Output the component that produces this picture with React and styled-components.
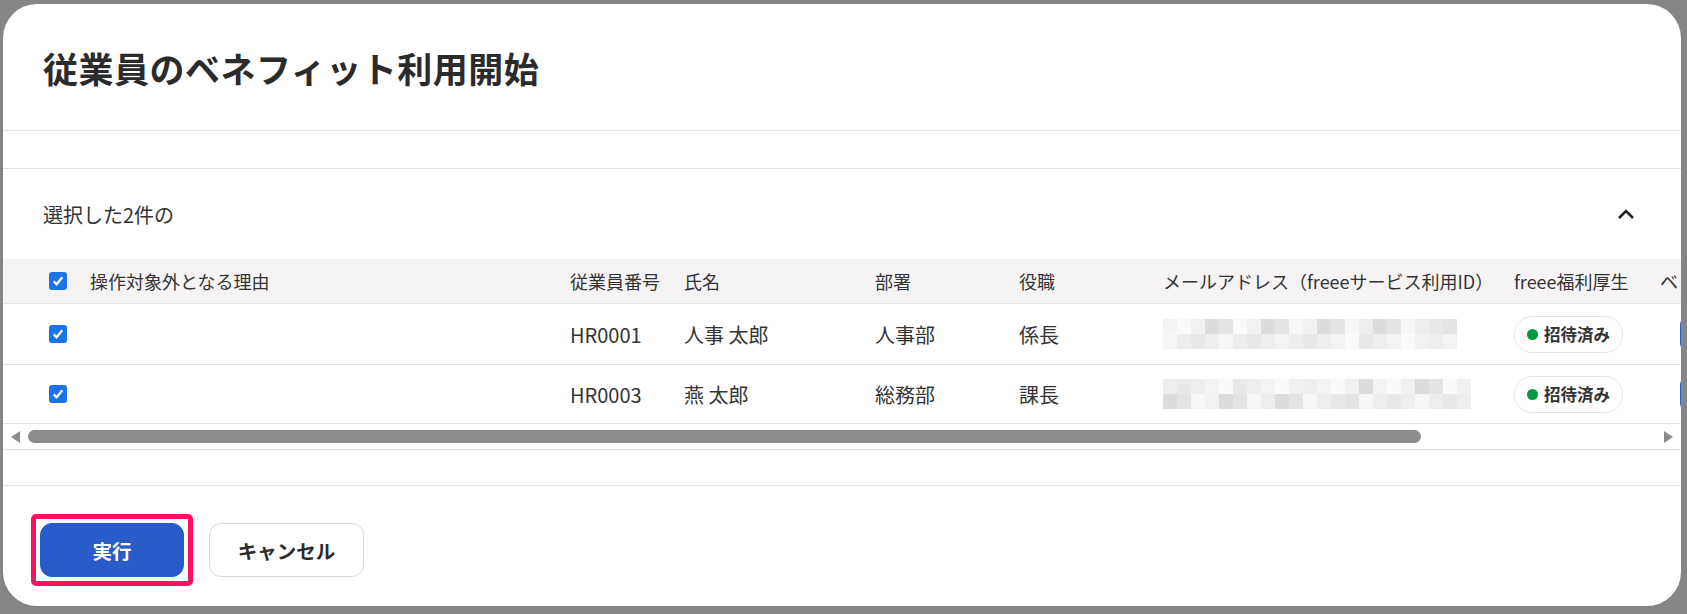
import React from "react";
import styled, { createGlobalStyle } from "styled-components";

const Global = createGlobalStyle`
  html, body { margin: 0; padding: 0; background: #858585; }
  body { font-family: "Noto Sans CJK JP", "Noto Sans", sans-serif; color: #222; }
`;

const Screen = styled.div`
  width: 1687px;
  height: 614px;
  overflow: hidden;
  padding: 4px 6px 0 3px;
  box-sizing: border-box;
`;

const Dialog = styled.div`
  background: #fff;
  border-radius: 34px;
  height: 602px;
  display: flex;
  flex-direction: column;
  overflow: hidden;
`;

const Header = styled.div`
  height: 127px;
  display: flex;
  align-items: center;
  padding-left: 40px;
  border-bottom: 1px solid #e2e2e2;
  box-sizing: border-box;
`;

const Title = styled.h1`
  margin: 0;
  font-size: 35px;
  font-weight: 700;
  color: #2b2b2b;
  letter-spacing: 0.5px;
`;

const Gap = styled.div`
  height: ${(p) => p.h}px;
  border-bottom: 1px solid #e2e2e2;
  flex-shrink: 0;
`;

const SectionHead = styled.div`
  height: 90px;
  display: flex;
  align-items: center;
  justify-content: space-between;
  padding: 0 46px 0 40px;
  font-size: 20px;
  color: #333;
`;

const TableWrap = styled.div`
  overflow: hidden;
`;

const Row = styled.div`
  display: grid;
  grid-template-columns: 41px 480px 114px 191px 144px 144px 351px 146px 80px;
  align-items: center;
  height: ${(p) => p.h}px;
  padding-left: 46px;
  background: ${(p) => (p.head ? "#f5f3f3" : "#fff")};
  border-bottom: 1px solid #e4e4e4;
  font-size: ${(p) => (p.head ? 18 : 20)}px;
  color: #333;
  white-space: nowrap;
  width: 1760px;
  box-sizing: border-box;
`;

const Check = styled.span`
  width: 18px;
  height: 18px;
  border-radius: 3px;
  background: #1a73e8;
  display: flex;
  align-items: center;
  justify-content: center;
`;

const Mosaic = styled.div`
  display: grid;
  grid-template-columns: repeat(${(p) => p.cols}, 14px);
  grid-auto-rows: 15px;
  width: fit-content;
`;

const Badge = styled.span`
  display: inline-flex;
  align-items: center;
  gap: 6px;
  height: 35px;
  padding: 0 12px;
  border: 1px solid #e4e4e4;
  border-radius: 18px;
  font-size: 16.5px;
  font-weight: 700;
  width: fit-content;
  &::before {
    content: "";
    width: 11px;
    height: 11px;
    border-radius: 50%;
    background: #009a3e;
  }
`;

const BlueStub = styled.span`
  width: 40px;
  height: 36px;
  border-radius: 9px;
  background: #2a5cc9;
  margin-left: 20px;
`;

const Scrollbar = styled.div`
  height: 25px;
  display: flex;
  align-items: center;
  gap: 8px;
  padding: 0 8px;
  border-bottom: 1px solid #e4e4e4;
`;

const Thumb = styled.div`
  width: 1393px;
  height: 13px;
  border-radius: 7px;
  background: #8c8c8c;
`;

const Arrow = styled.span`
  width: 0;
  height: 0;
  border-top: 6px solid transparent;
  border-bottom: 6px solid transparent;
  ${(p) => (p.dir === "left" ? "border-right: 9px solid #8c8c8c;" : "border-left: 9px solid #8c8c8c;")}
  margin-left: ${(p) => (p.dir === "left" ? 0 : "auto")};
`;

const Footer = styled.div`
  flex: 1;
  display: flex;
  align-items: flex-start;
  gap: 16px;
  padding: 28px 0 0 28px;
`;

const Highlight = styled.div`
  border: 5px solid #ff1060;
  border-radius: 5px;
  padding: 4px;
`;

const SecondaryWrap = styled.div`
  padding-top: 9px;
`;

const Button = styled.button`
  height: 54px;
  width: ${(p) => p.w}px;
  border-radius: 12px;
  font-family: inherit;
  font-size: 19.5px;
  font-weight: 700;
  border: 1px solid ${(p) => (p.primary ? "#2a5cc9" : "#d8d8d8")};
  background: ${(p) => (p.primary ? "#2a5cc9" : "#fff")};
  color: ${(p) => (p.primary ? "#fff" : "#2b2b2b")};
  display: block;
`;

const CheckIcon = () => (
  <Check>
    <svg width="14" height="14" viewBox="0 0 13 13">
      <path d="M2.5 6.8 L5.2 9.5 L10.5 3" stroke="#fff" strokeWidth="2.2" fill="none" />
    </svg>
  </Check>
);

const shades = ["#f3f3f3", "#eceef0", "#e8e8e8", "#ededed", "#f6f6f6", "#e4e4e4", "#dcdcdc", "#f1f1f1", "#fafafa"];

const Blur = ({ seed, cols }) => (
  <Mosaic cols={cols}>
    {Array.from({ length: cols * 2 }).map((_, i) => (
      <span key={i} style={{ background: shades[(i * 7 + seed * 3 + (i % 5)) % shades.length] }} />
    ))}
  </Mosaic>
);

const rows = [
  { id: "HR0001", name: "人事 太郎", dept: "人事部", role: "係長", cols: 21 },
  { id: "HR0003", name: "燕 太郎", dept: "総務部", role: "課長", cols: 22 },
];

export default function App() {
  return (
    <Screen>
      <Global />
      <Dialog>
        <Header>
          <Title>従業員のベネフィット利用開始</Title>
        </Header>
        <Gap h={37} />
        <SectionHead>
          <span>選択した2件の</span>
          <svg width="18" height="12" viewBox="0 0 18 12">
            <path d="M2 10 L9 3 L16 10" stroke="#222" strokeWidth="2.6" fill="none" />
          </svg>
        </SectionHead>
        <TableWrap>
          <Row head h={45}>
            <CheckIcon />
            <span>操作対象外となる理由</span>
            <span>従業員番号</span>
            <span>氏名</span>
            <span>部署</span>
            <span>役職</span>
            <span>メールアドレス（freeeサービス利用ID）</span>
            <span>freee福利厚生</span>
            <span>ベ</span>
          </Row>
          {rows.map((r, i) => (
            <Row key={r.id} h={i === 0 ? 61 : 59}>
              <CheckIcon />
              <span />
              <span>{r.id}</span>
              <span>{r.name}</span>
              <span>{r.dept}</span>
              <span>{r.role}</span>
              <Blur seed={i} cols={r.cols} />
              <Badge>招待済み</Badge>
              <BlueStub />
            </Row>
          ))}
          <Scrollbar>
            <Arrow dir="left" />
            <Thumb />
            <Arrow dir="right" />
          </Scrollbar>
        </TableWrap>
        <Gap h={35} />
        <Footer>
          <Highlight>
            <Button primary w={144}>実行</Button>
          </Highlight>
          <SecondaryWrap>
            <Button w={155}>キャンセル</Button>
          </SecondaryWrap>
        </Footer>
      </Dialog>
    </Screen>
  );
}
